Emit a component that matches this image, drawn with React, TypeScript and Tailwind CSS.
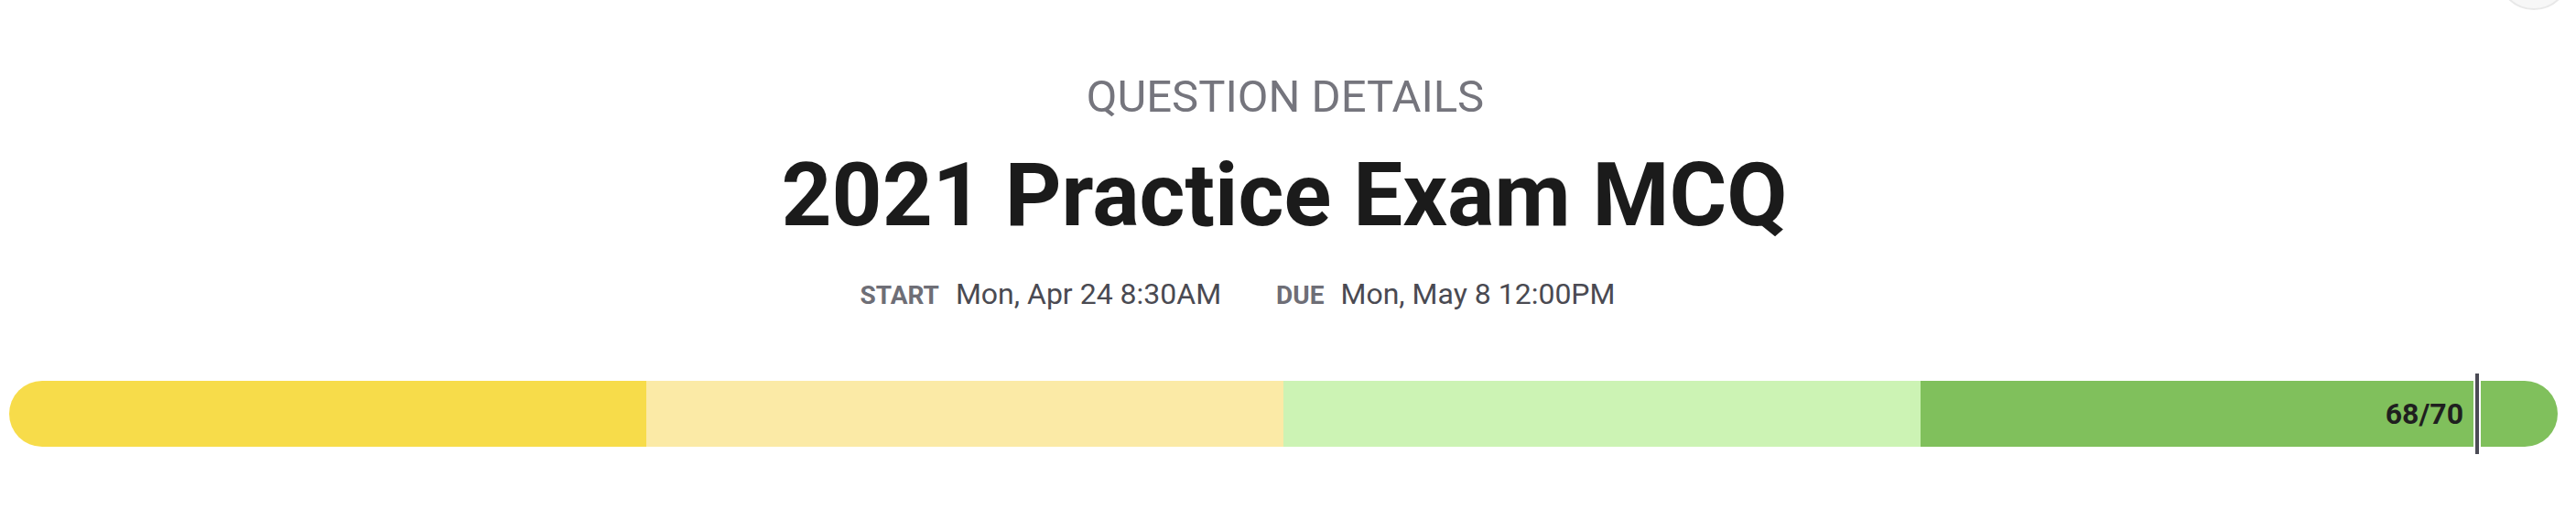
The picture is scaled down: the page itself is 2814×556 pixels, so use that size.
import React from 'react';

const segments = ['bg-[#f7dc4a]', 'bg-[#fbeaa6]', 'bg-[#ccf3b4]', 'bg-[#80c05c]'];

function ScoreBar({ score, total }: { score: number; total: number }) {
  return (
    <div className="relative flex h-[72px] w-full">
      <div className="flex w-full overflow-hidden rounded-full">
        {segments.map((color, i) => (
          <div key={i} className={`${color} flex flex-1 items-center justify-end`}>
            {i === segments.length - 1 && (
              <span className="pr-[103px] text-[32px] font-bold leading-none text-[#1f1f1f]">
                {score}/{total}
              </span>
            )}
          </div>
        ))}
      </div>
      <div className="absolute left-[2692px] top-[-8px] h-[88px] w-[8px] border-x-2 border-white bg-[#4b4b55]" />
    </div>
  );
}

export default function App() {
  return (
    <div className="relative h-[556px] w-full overflow-hidden bg-white font-['Roboto','Liberation_Sans',sans-serif]">
      <div className="absolute right-[6px] top-[-69px] h-[80px] w-[80px] rounded-full border-2 border-[#e8e8e8] bg-[#f7f7f7]" />
      <div className="flex flex-col items-center pt-[78px]">
        <div className="pr-[6px] text-[49px] leading-[56px] text-[#75757d]">QUESTION DETAILS</div>
        <h1 className="mt-[23px] pr-[8px] text-[96px] font-bold leading-[112px] text-[#1b1b1b]">2021 Practice Exam MCQ</h1>
        <div className="mt-[32px] flex items-baseline gap-[60px] pr-[110px] leading-[40px]">
          <div className="flex items-baseline gap-[18px]">
            <span className="text-[28px] font-bold text-[#6e6e76]">START</span>
            <span className="text-[32px] text-[#4a4a52]">Mon, Apr 24 8:30AM</span>
          </div>
          <div className="flex items-baseline gap-[18px]">
            <span className="text-[28px] font-bold text-[#6e6e76]">DUE</span>
            <span className="text-[32px] text-[#4a4a52]">Mon, May 8 12:00PM</span>
          </div>
        </div>
      </div>
      <div className="mt-[73px] pl-[10px] pr-[20px]">
        <ScoreBar score={68} total={70} />
      </div>
    </div>
  );
}
